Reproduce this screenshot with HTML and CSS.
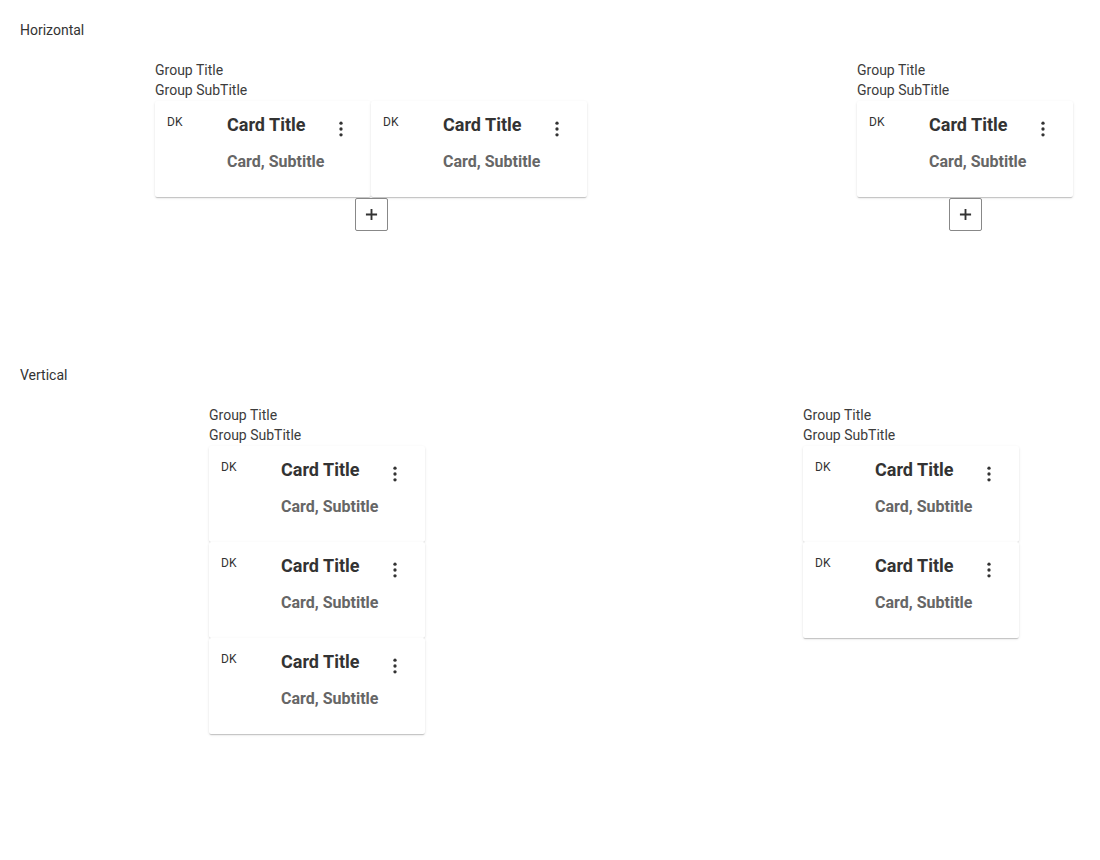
FILE: index.html
```html
<!DOCTYPE html>
<html>
<head>
<meta charset="utf-8">
<link rel="stylesheet" href="styles.css">
</head>
<body>
<div class="page">
  <section class="section section--horizontal">
    <div class="section-label">Horizontal</div>
    <div class="groups">
      <div class="group">
        <div class="group-title">Group Title</div>
        <div class="group-subtitle">Group SubTitle</div>
        <div class="cards cards--row">
          <div class="card">
            <div class="avatar">DK</div>
            <div class="card-body">
              <div class="card-title">Card Title</div>
              <div class="card-subtitle">Card, Subtitle</div>
            </div>
            <button class="kebab"><svg viewBox="0 0 24 24" width="20" height="20"><circle cx="12" cy="5" r="2"/><circle cx="12" cy="12" r="2"/><circle cx="12" cy="19" r="2"/></svg></button>
          </div>
          <div class="card">
            <div class="avatar">DK</div>
            <div class="card-body">
              <div class="card-title">Card Title</div>
              <div class="card-subtitle">Card, Subtitle</div>
            </div>
            <button class="kebab"><svg viewBox="0 0 24 24" width="20" height="20"><circle cx="12" cy="5" r="2"/><circle cx="12" cy="12" r="2"/><circle cx="12" cy="19" r="2"/></svg></button>
          </div>
        </div>
        <div class="add-wrap"><button class="add"><svg viewBox="0 0 14 14" width="13" height="13"><path d="M7 1v12M1 7h12"/></svg></button></div>
      </div>
      <div class="group">
        <div class="group-title">Group Title</div>
        <div class="group-subtitle">Group SubTitle</div>
        <div class="cards cards--row">
          <div class="card">
            <div class="avatar">DK</div>
            <div class="card-body">
              <div class="card-title">Card Title</div>
              <div class="card-subtitle">Card, Subtitle</div>
            </div>
            <button class="kebab"><svg viewBox="0 0 24 24" width="20" height="20"><circle cx="12" cy="5" r="2"/><circle cx="12" cy="12" r="2"/><circle cx="12" cy="19" r="2"/></svg></button>
          </div>
        </div>
        <div class="add-wrap"><button class="add"><svg viewBox="0 0 14 14" width="13" height="13"><path d="M7 1v12M1 7h12"/></svg></button></div>
      </div>
    </div>
  </section>

  <section class="section section--vertical">
    <div class="section-label">Vertical</div>
    <div class="groups">
      <div class="group">
        <div class="group-title">Group Title</div>
        <div class="group-subtitle">Group SubTitle</div>
        <div class="cards cards--col">
          <div class="card">
            <div class="avatar">DK</div>
            <div class="card-body">
              <div class="card-title">Card Title</div>
              <div class="card-subtitle">Card, Subtitle</div>
            </div>
            <button class="kebab"><svg viewBox="0 0 24 24" width="20" height="20"><circle cx="12" cy="5" r="2"/><circle cx="12" cy="12" r="2"/><circle cx="12" cy="19" r="2"/></svg></button>
          </div>
          <div class="card">
            <div class="avatar">DK</div>
            <div class="card-body">
              <div class="card-title">Card Title</div>
              <div class="card-subtitle">Card, Subtitle</div>
            </div>
            <button class="kebab"><svg viewBox="0 0 24 24" width="20" height="20"><circle cx="12" cy="5" r="2"/><circle cx="12" cy="12" r="2"/><circle cx="12" cy="19" r="2"/></svg></button>
          </div>
          <div class="card">
            <div class="avatar">DK</div>
            <div class="card-body">
              <div class="card-title">Card Title</div>
              <div class="card-subtitle">Card, Subtitle</div>
            </div>
            <button class="kebab"><svg viewBox="0 0 24 24" width="20" height="20"><circle cx="12" cy="5" r="2"/><circle cx="12" cy="12" r="2"/><circle cx="12" cy="19" r="2"/></svg></button>
          </div>
        </div>
      </div>
      <div class="group">
        <div class="group-title">Group Title</div>
        <div class="group-subtitle">Group SubTitle</div>
        <div class="cards cards--col">
          <div class="card">
            <div class="avatar">DK</div>
            <div class="card-body">
              <div class="card-title">Card Title</div>
              <div class="card-subtitle">Card, Subtitle</div>
            </div>
            <button class="kebab"><svg viewBox="0 0 24 24" width="20" height="20"><circle cx="12" cy="5" r="2"/><circle cx="12" cy="12" r="2"/><circle cx="12" cy="19" r="2"/></svg></button>
          </div>
          <div class="card">
            <div class="avatar">DK</div>
            <div class="card-body">
              <div class="card-title">Card Title</div>
              <div class="card-subtitle">Card, Subtitle</div>
            </div>
            <button class="kebab"><svg viewBox="0 0 24 24" width="20" height="20"><circle cx="12" cy="5" r="2"/><circle cx="12" cy="12" r="2"/><circle cx="12" cy="19" r="2"/></svg></button>
          </div>
        </div>
      </div>
    </div>
  </section>
</div>
</body>
</html>
```

FILE: styles.css
```css
body {
  margin: 0;
  background: #fff;
  font-family: Roboto, "Liberation Sans", sans-serif;
  font-size: 14px;
  line-height: 20px;
  color: #333;
}
.page {
  padding: 20px;
}
.section-label {
  color: #333;
  margin-bottom: 20px;
}
.section--horizontal {
  height: 325px;
  margin-bottom: 20px;
}
.groups {
  display: flex;
  justify-content: space-around;
  align-items: flex-start;
}
.group {
  display: flex;
  flex-direction: column;
}
.group:last-child {
  margin-right: -128px;
}
.group-title,
.group-subtitle {
  color: #3c3c3c;
}
.cards {
  display: flex;
  margin-top: 1px;
}
.cards--row {
  flex-direction: row;
}
.cards--col {
  flex-direction: column;
}
.card {
  width: 216px;
  height: 96px;
  box-sizing: border-box;
  padding: 12px 20px 12px 12px;
  background: #fff;
  border-radius: 2px;
  box-shadow: 0 2px 1px -1px rgba(0, 0, 0, 0.12), 0 1px 1px 0 rgba(0, 0, 0, 0.08), 0 1px 3px 0 rgba(0, 0, 0, 0.1);
  display: flex;
  align-items: flex-start;
}
.avatar {
  width: 60px;
  flex: none;
  font-size: 12px;
  line-height: 16px;
  margin-top: 1px;
  color: #333;
}
.card-body {
  flex: 1;
  min-width: 0;
}
.card-title {
  font-size: 18px;
  line-height: 24px;
  font-weight: 700;
  color: #333;
}
.card-subtitle {
  margin-top: 13px;
  font-size: 16px;
  line-height: 24px;
  font-weight: 700;
  color: #666;
}
.kebab {
  flex: none;
  width: 20px;
  height: 20px;
  margin-top: 6px;
  padding: 0;
  border: 0;
  background: none;
  display: flex;
}
.kebab svg {
  fill: #333;
}
.add-wrap {
  display: flex;
  justify-content: center;
  margin-top: 1px;
}
.add {
  width: 33px;
  height: 33px;
  box-sizing: border-box;
  border: 1px solid #888;
  border-radius: 2px;
  background: #fff;
  padding: 0;
  display: flex;
  align-items: center;
  justify-content: center;
}
.add svg {
  stroke: #333;
  stroke-width: 2;
  fill: none;
}
```
